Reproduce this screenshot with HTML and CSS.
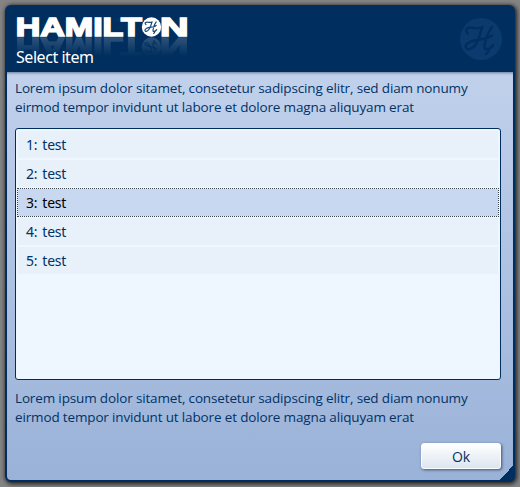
FILE: index.html
```
<!DOCTYPE html>
<html lang="en">
<head>
<meta charset="utf-8">
<title>Select item</title>
<link rel="stylesheet" href="styles.css">
</head>
<body>
<main class="dialog">
  <header class="header">
    <div class="brand">
      <svg class="logo" width="174" height="44" viewBox="0 0 174 44">
        <defs>
          <symbol id="script-h" viewBox="0 0 42 42">
            <path d="M8 15.500C3 10 9 9 14 10C18 10.500 20 10 22 9.500C19 19 18 28 10 31C5 32 4 27 9 24.500C16 20 25 23 32 17.500M32 9C28 14 25 23 24.500 28C24 33 30 32 33 27M25 31C29 31 30 33 26 36"/>
          </symbol>
          <linearGradient id="fade" x1="0" y1="24" x2="0" y2="43" gradientUnits="userSpaceOnUse">
            <stop offset="0" stop-color="#fff" stop-opacity=".18"/>
            <stop offset="1" stop-color="#fff" stop-opacity="0"/>
          </linearGradient>
          <mask id="reflection" maskUnits="userSpaceOnUse" x="0" y="23" width="174" height="21"><rect y="23" width="174" height="21" fill="url(#fade)"/></mask>
          <g id="wordmark">
            <text class="word" x="0.700" y="23" textLength="126" lengthAdjust="spacingAndGlyphs">HAMILT</text>
            <circle cx="136.500" cy="14" r="9.700" fill="#fff"/>
            <use class="mark" href="#script-h" x="127.500" y="5" width="18" height="18"/>
            <text class="word" x="145" y="23" textLength="28.500" lengthAdjust="spacingAndGlyphs">N</text>
          </g>
        </defs>
        <use href="#wordmark"/>
        <g mask="url(#reflection)"><use href="#wordmark" transform="matrix(1 0 0 -1 0 48)"/></g>
      </svg>
      <h1 class="title">Select item</h1>
    </div>
    <svg class="emblem" width="42" height="42" viewBox="0 0 42 42">
      <circle cx="21" cy="21" r="21"/>
      <use href="#script-h" width="42" height="42"/>
    </svg>
  </header>
  <section class="content">
    <p class="copy">Lorem ipsum dolor sitamet, consetetur sadipscing elitr, sed diam nonumy<br>eirmod tempor invidunt ut labore et dolore magna aliquyam erat</p>
    <ul class="list">
      <li class="item">1: test</li>
      <li class="item">2: test</li>
      <li class="item selected">3: test</li>
      <li class="item">4: test</li>
      <li class="item">5: test</li>
    </ul>
    <p class="copy">Lorem ipsum dolor sitamet, consetetur sadipscing elitr, sed diam nonumy<br>eirmod tempor invidunt ut labore et dolore magna aliquyam erat</p>
    <button class="ok" type="button">Ok</button>
    <span class="grip"></span>
  </section>
</main>
</body>
</html>
```
FILE: styles.css
```
* { box-sizing: border-box; }
body { margin: 0; height: 487px; padding: 5px; background: #848484; overflow: hidden; font-family: "Noto Sans", sans-serif; }
.dialog { width: 510px; height: 477px; display: flex; flex-direction: column; border: 2px solid #002f5f; border-radius: 6px; background: #002f5f; box-shadow: 1px 1px 4px 1px #222; }
.header { height: 65px; display: flex; justify-content: space-between; flex: none; padding: 6px 11px 0 8px; }
.brand { display: flex; flex-direction: column; }
.logo { display: block; overflow: visible; }
.word { font: bold 26px "Liberation Sans", sans-serif; fill: #fff; stroke: #fff; stroke-width: 1.5px; }
.mark { fill: none; stroke: #164779; stroke-width: 2.8px; stroke-linecap: round; }
.title { margin: -11px 0 0 1px; font-size: 16px; line-height: 22px; font-weight: 400; color: #fff; letter-spacing: -.45px; }
.emblem { margin-top: 5px; fill: #0b3a6e; }
.emblem use { fill: none; stroke: #002f5f; stroke-width: 2.5px; stroke-linecap: round; }
.content { position: relative; flex: 1; display: flex; flex-direction: column; padding: 7px 12px 0 8px; border-radius: 0 0 4px 4px; background: linear-gradient(#c1d1ec, #9ab2d8); box-shadow: inset 0 3px 3px -2px #677b99; }
.copy { margin: 0; height: 38px; font-family: "Open Sans", sans-serif; font-size: 13.5px; line-height: 19px; color: #003366; letter-spacing: -.15px; white-space: nowrap; }
.list { list-style: none; height: 252px; margin: 11px 0 9px; padding: 2px; border: 1px solid #002f5f; border-radius: 3px; background: #eef6ff; display: flex; flex-direction: column; gap: 2px; flex: none; }
.item { height: 27px; padding-left: 8px; line-height: 27px; font-size: 14px; color: #003366; background: #e8f0fa; letter-spacing: -.2px; word-spacing: 1.5px; }
.selected { color: #000; background: #c8d8f0; outline: 1px dotted #38434d; }
.ok { align-self: flex-end; width: 80px; height: 26px; margin-top: 16px; padding: 0; border: 1px solid #f9fbfd; border-radius: 3px; background: linear-gradient(#fff, #dce5ef); box-shadow: 1px 1px 3px #42536e; font: 14px "Open Sans", sans-serif; color: #003366; }
.grip { position: absolute; right: 0; bottom: 0; width: 14px; height: 14px; background: linear-gradient(135deg, transparent 50%, #002f5f 50%); }
```
